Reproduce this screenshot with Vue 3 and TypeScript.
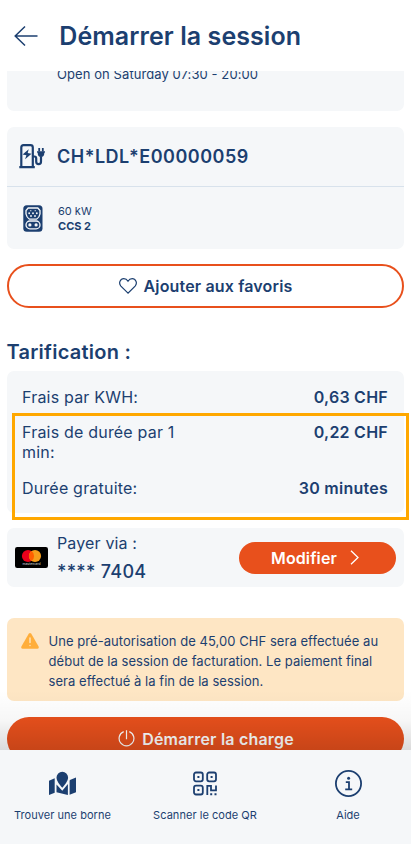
<script setup lang="ts">
interface Fee {
  label: string
  value: string
}

const fees: Fee[] = [
  { label: 'Frais par KWH:', value: '0,63 CHF' },
  { label: 'Frais de durée par 1 min:', value: '0,22 CHF' },
  { label: 'Durée gratuite:', value: '30 minutes' },
]
</script>

<template>
  <div class="screen">
    <header class="topbar">
      <svg class="back" viewBox="0 0 24 22" width="24" height="22">
        <path d="M11 1.5 1.2 11 11 20.5M1.2 11H23.5" />
      </svg>
      <h1><span>Démarrer la session</span></h1>
    </header>

    <main class="content">
      <section class="card hours"><p>Open on Saturday 07:30 - 20:00</p></section>

      <section class="card charger">
        <div class="charger-id">
          <svg viewBox="0 0 27 25" width="27" height="25">
            <path class="line bold" d="M2.3 23V3.5Q2.3 1.2 4.5 1.2H11.5Q13.8 1.2 13.8 3.5V23M.3 23.2H15.8M13.8 12.5H15.5Q17.2 12.5 17.2 14.5V17.5Q17.2 20.2 19.6 20.2T22 17.5V12.5" />
            <path class="solid" d="M9.7 5.3 3.6 10.5 7.4 11.2 6.1 15.2 12.5 9.7 8.7 9.1ZM18 7.2H26V8.3L25.3 9Q25.3 12.8 22 13Q18.7 12.8 18.7 9L18 8.3Z" />
            <path class="line" d="M20.2 7.5V4M23.8 7.5V4" />
          </svg>
          <strong><span>CH*LDL*E00000059</span></strong>
        </div>
        <div class="connector">
          <svg viewBox="0 0 20 27" width="20" height="27">
            <rect class="solid" x=".3" y=".3" width="19.2" height="26.4" rx="3.5" />
            <path class="ring" d="M5.2 3H14.8L17 5.5V9Q16.5 12.2 13.5 14.2H6.5Q3.5 12.2 3 9V5.5Z" />
            <rect class="ring" x="3" y="16" width="14" height="7.8" rx="3.9" />
            <g class="pins"><circle cx="7.8" cy="5.7" r=".6" /><circle cx="12.2" cy="5.7" r=".6" /><circle cx="6.2" cy="8.3" r=".95" /><circle cx="10" cy="8.3" r=".95" /><circle cx="13.8" cy="8.3" r=".95" /><circle cx="8" cy="11" r=".95" /><circle cx="12" cy="11" r=".95" /><circle cx="6.9" cy="19.9" r="1.6" /><circle cx="13.1" cy="19.9" r="1.6" /></g>
          </svg>
          <p><span class="power">60 kW</span><b class="plug">CCS 2</b></p>
        </div>
      </section>

      <button class="favorite">
        <svg viewBox="0 0 18 16" width="18" height="16"><path d="M9 15.2 1.9 8.1C-.8 5 1.3.7 4.8.7 6.8.7 8.1 1.7 9 3.2 9.9 1.7 11.2.7 13.2.7 16.7.7 18.8 5 16.1 8.1Z" /></svg>
        <span>Ajouter aux favoris</span>
      </button>

      <h2><span>Tarification :</span></h2>

      <section class="card fees">
        <dl>
          <div v-for="fee in fees" :key="fee.label" class="fee">
            <dt>{{ fee.label }}</dt>
            <dd>{{ fee.value }}</dd>
          </div>
        </dl>
        <div class="highlight"></div>
      </section>

      <section class="card payment">
        <svg class="bankcard" viewBox="0 0 33 21" width="33" height="21">
          <rect width="33" height="21" rx="2.2" fill="#000" />
          <circle cx="13" cy="9" r="6.1" fill="#eb001b" />
          <circle cx="20" cy="9" r="6.1" fill="#f79e1b" />
          <path d="M16.5 4A6.1 6.1 0 0 1 16.5 14 6.1 6.1 0 0 1 16.5 4" fill="#ff5f00" />
          <text x="16.5" y="18.3" text-anchor="middle">mastercard</text>
        </svg>
        <p class="method"><span class="via">Payer via :</span><span class="digits">**** 7404</span></p>
        <button class="modify">
          <span>Modifier</span>
          <svg viewBox="0 0 9 15" width="9" height="15"><path d="M1 .7 8 7.5 1 14.3" /></svg>
        </button>
      </section>

      <section class="notice">
        <svg viewBox="0 0 18 16" width="18" height="16">
          <path fill="#ffae3b" d="M7.7.8Q9-.7 10.3.8L17.6 13.6Q18.2 15.7 16.3 15.8H1.7Q-.2 15.7.4 13.6Z" />
          <path stroke="#fee6c4" stroke-width="1.4" stroke-linecap="round" d="M9 5V9.5M9 12.4V12.5" />
        </svg>
        <p>Une pré-autorisation de 45,00 CHF sera effectuée au<br />début de la session de facturation. Le paiement final<br />sera effectué à la fin de la session.</p>
      </section>

      <button class="start">
        <svg viewBox="0 0 17 17" width="17" height="17"><path d="M8.5 .2V9.2M5.7 1.6A7.4 7.4 0 1 0 11.3 1.6" /></svg>
        <span>Démarrer la charge</span>
      </button>
      <div class="shade"></div>
    </main>

    <nav class="tabs">
      <a class="tab">
        <svg viewBox="0 0 27 24" width="27" height="24">
          <path class="solid" d="M0 9.3 5.7 6.7V21.2L0 23.6ZM20.6 9.5V23.2L27 20.8V6L20.9 8.4ZM7.5 13 13.3 19.2 18.9 12.4V23.5L7.5 20.8ZM13.3 .3A5.8 5.8 0 0 1 19.1 6.1C19.1 9.6 15.6 13.7 13.3 16.3 11 13.7 7.5 9.6 7.5 6.1A5.8 5.8 0 0 1 13.3 .3Z" />
        </svg>
        <span>Trouver une borne</span>
      </a>
      <a class="tab">
        <svg viewBox="0 0 24 24" width="24" height="24">
          <g class="line"><rect x="1" y="1" width="8.8" height="8.8" rx="2" /><rect x="14.2" y="1" width="8.8" height="8.8" rx="2" /><rect x="1" y="14.2" width="8.8" height="8.8" rx="2" /><path d="M14.3 23.5V14.3H18V18.8H23V14" /></g>
          <path class="solid" d="M4.4 4.4h2v2h-2zM17.6 4.4h2v2h-2zM4.4 17.6h2v2h-2zM17.2 21.7h2v2h-2zM21.5 21.7h2v2h-2z" />
        </svg>
        <span>Scanner le code QR</span>
      </a>
      <a class="tab">
        <svg viewBox="0 0 27 27" width="27" height="27">
          <circle class="line" cx="13.5" cy="13.5" r="12.6" />
          <circle class="solid" cx="13.6" cy="8.2" r="1.5" />
          <path class="line" d="M10.8 12.2H14V19.2M10.2 19.3H17.2" />
        </svg>
        <span>Aide</span>
      </a>
    </nav>
  </div>
</template>

<style>
body {
  margin: 0;
  background: #fff;
}
</style>

<style scoped>
.screen {
  width: 411px;
  height: 844px;
  display: flex;
  flex-direction: column;
  overflow: hidden;
  background: #fff;
  color: #1c3f70;
  font-family: Inter, 'Liberation Sans', sans-serif;
}
h1, h2, p, dl, dd {
  margin: 0;
}
button {
  font: inherit;
  box-sizing: border-box;
  display: flex;
  align-items: center;
}
svg {
  flex: none;
  display: block;
  fill: none;
}
.solid {
  fill: #1c3f70;
}
.line {
  fill: none;
  stroke: #1c3f70;
  stroke-width: 1.8;
}
.bold {
  stroke-width: 2.2;
}
.ring {
  stroke: #f5f7f9;
  stroke-width: 1.3;
}
.pins {
  fill: #f5f7f9;
}
.topbar {
  flex: none;
  height: 71px;
  box-sizing: border-box;
  display: flex;
  align-items: center;
  gap: 21px;
  padding: 0 0 0 14.3px;
}
.back {
  stroke: #1c3f70;
  stroke-width: 1.5;
}
h1 {
  font-size: 25px;
  font-weight: 600;
  line-height: 30px;
  letter-spacing: 0.07px;
}
.content {
  position: relative;
  flex: 1;
  min-height: 0;
  overflow: hidden;
  display: flex;
  flex-direction: column;
  padding: 0 7.5px 0 6.5px;
}
.content > * {
  flex: none;
}
.card {
  background: #f5f7f9;
  border-radius: 7px;
}
.hours {
  height: 40px;
  border-radius: 0 0 7px 7px;
  font-size: 13px;
  line-height: 16px;
  letter-spacing: 0.08px;
}
.hours p {
  margin: -5px 0 0 50.5px;
}
.charger {
  height: 122.5px;
  margin-top: 15.5px;
}
.charger-id {
  height: 59px;
  display: flex;
  align-items: center;
  gap: 11.5px;
  padding-left: 12px;
  border-bottom: 1px solid #d8e2ec;
}
.charger-id strong {
  font-size: 18px;
  font-weight: 600;
  letter-spacing: 0.5px;
}
.connector {
  display: flex;
  align-items: center;
  gap: 15.5px;
  height: 63px;
  padding-left: 16px;
}
.connector p {
  display: flex;
  flex-direction: column;
  align-items: flex-start;
  padding-top: 2px;
  font-size: 11px;
  line-height: 15px;
}
.plug {
  font-weight: 700;
}
.favorite {
  height: 44px;
  margin-top: 14.5px;
  justify-content: center;
  gap: 7px;
  padding: 0 0 0 1px;
  border: 2px solid #e8501c;
  border-radius: 22px;
  background: #fff;
  color: #1c3f70;
  font-size: 16px;
  font-weight: 600;
  letter-spacing: 0.15px;
}
.favorite svg {
  stroke: #1c3f70;
  stroke-width: 1.2;
}
h2 {
  margin-top: 32px;
  font-size: 20px;
  font-weight: 600;
  line-height: 24px;
  letter-spacing: 0.25px;
}
.fees {
  position: relative;
  height: 142px;
  margin-top: 7.5px;
  font-size: 16px;
  line-height: 20px;
  letter-spacing: 0.2px;
}
dl {
  display: flex;
  flex-direction: column;
  gap: 15.5px;
  padding: 15.5px 15.5px 0;
}
.fee {
  display: flex;
  justify-content: space-between;
}
dt {
  width: 165px;
}
dd {
  font-weight: 600;
  letter-spacing: 0.25px;
}
.highlight {
  position: absolute;
  left: 5px;
  top: 41.5px;
  width: 391px;
  height: 101px;
  border: 3px solid #ffa800;
}
.payment {
  height: 59.5px;
  margin-top: 14.5px;
  display: flex;
  align-items: center;
  padding: 0 7.5px 0 8.5px;
}
.bankcard text {
  fill: #ddd;
  font-size: 3.4px;
}
.method {
  display: flex;
  flex-direction: column;
  align-items: flex-start;
  gap: 7px;
  margin: 0 0 0 9px;
  font-size: 16px;
  line-height: 22px;
  letter-spacing: 0.15px;
}
.digits {
  font-size: 18px;
  font-weight: 500;
  letter-spacing: 0.3px;
}
.modify {
  width: 157px;
  height: 32px;
  margin: 1px 0 0 auto;
  justify-content: center;
  gap: 13px;
  padding: 0 5px 0 0;
  border: 0;
  border-radius: 16px;
  background: #e8501c;
  color: #fff;
  font-size: 16px;
  font-weight: 600;
  letter-spacing: 0.12px;
}
.modify svg {
  stroke: #fff;
  stroke-width: 1.3;
}
.notice {
  height: 83.5px;
  box-sizing: border-box;
  margin-top: 30.5px;
  display: flex;
  gap: 10px;
  padding: 13px 0 0 14px;
  border-radius: 7px;
  background: #fee6c4;
  font-size: 13px;
  line-height: 20px;
}
.notice svg {
  margin-top: 2.5px;
}
.notice p {
  white-space: nowrap;
  letter-spacing: 0.05px;
}
.start {
  height: 44px;
  margin-top: 15.5px;
  justify-content: center;
  gap: 7px;
  padding: 0 0 0 2px;
  border: 0;
  border-radius: 22px;
  background: #e8501c;
  color: #fff;
  font-size: 16px;
  font-weight: 600;
  letter-spacing: 0.2px;
}
.start svg {
  stroke: #fff;
  stroke-width: 1.2;
}
.shade {
  position: absolute;
  inset: auto 0 0;
  height: 60px;
  background: linear-gradient(rgba(0, 0, 0, 0), rgba(0, 0, 0, 0.03) 50%, rgba(0, 0, 0, 0.14));
}
.tabs {
  flex: none;
  height: 94.5px;
  display: grid;
  grid-template-columns: 125px 1fr 126px;
  background: #f5f7f9;
}
.tab {
  display: flex;
  flex-direction: column;
  align-items: center;
  font-size: 11px;
  line-height: 14px;
  letter-spacing: 0.04px;
}
.tab svg {
  height: 27px;
  margin: 20.5px 0 11px;
}
</style>
